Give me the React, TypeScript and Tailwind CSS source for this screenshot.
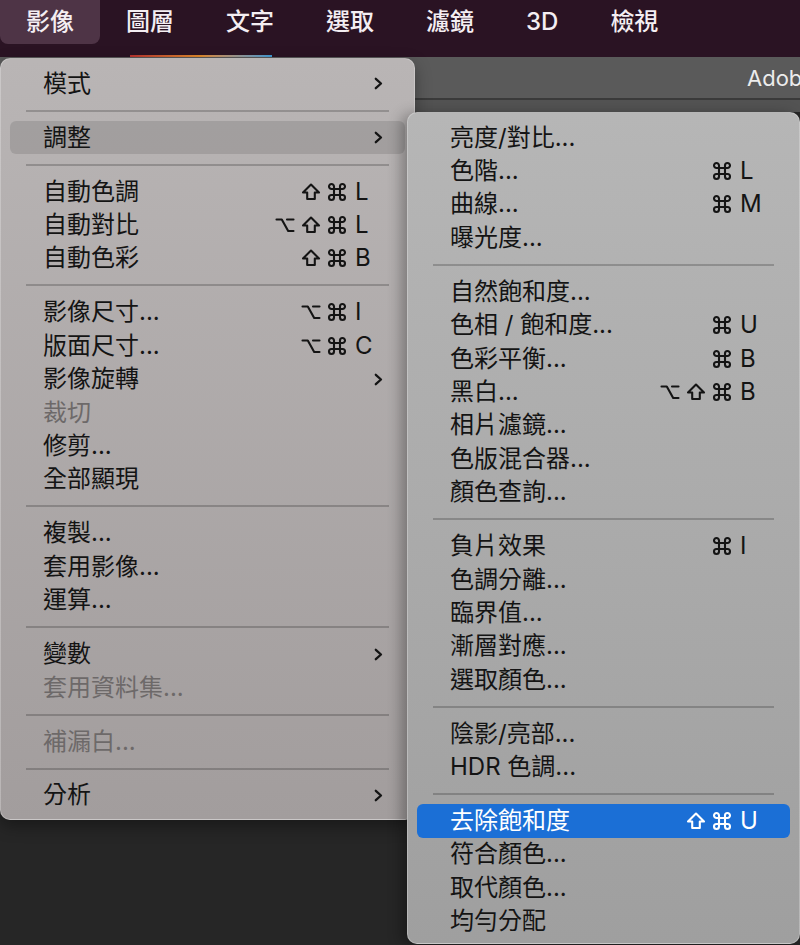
import React from 'react'

type Mod = 'opt' | 'shift' | 'cmd'

type Row =
  | { label: string; mods?: Mod[]; keyChar?: string; sub?: boolean; disabled?: boolean; hl?: 'gray' | 'blue' }
  | 'sep'

const imageMenu: Row[] = [
  { label: '模式', sub: true },
  'sep',
  { label: '調整', sub: true, hl: 'gray' },
  'sep',
  { label: '自動色調', mods: ['shift', 'cmd'], keyChar: 'L' },
  { label: '自動對比', mods: ['opt', 'shift', 'cmd'], keyChar: 'L' },
  { label: '自動色彩', mods: ['shift', 'cmd'], keyChar: 'B' },
  'sep',
  { label: '影像尺寸...', mods: ['opt', 'cmd'], keyChar: 'I' },
  { label: '版面尺寸...', mods: ['opt', 'cmd'], keyChar: 'C' },
  { label: '影像旋轉', sub: true },
  { label: '裁切', disabled: true },
  { label: '修剪...' },
  { label: '全部顯現' },
  'sep',
  { label: '複製...' },
  { label: '套用影像...' },
  { label: '運算...' },
  'sep',
  { label: '變數', sub: true },
  { label: '套用資料集...', disabled: true },
  'sep',
  { label: '補漏白...', disabled: true },
  'sep',
  { label: '分析', sub: true },
]

const adjustMenu: Row[] = [
  { label: '亮度/對比...' },
  { label: '色階...', mods: ['cmd'], keyChar: 'L' },
  { label: '曲線...', mods: ['cmd'], keyChar: 'M' },
  { label: '曝光度...' },
  'sep',
  { label: '自然飽和度...' },
  { label: '色相 / 飽和度...', mods: ['cmd'], keyChar: 'U' },
  { label: '色彩平衡...', mods: ['cmd'], keyChar: 'B' },
  { label: '黑白...', mods: ['opt', 'shift', 'cmd'], keyChar: 'B' },
  { label: '相片濾鏡...' },
  { label: '色版混合器...' },
  { label: '顏色查詢...' },
  'sep',
  { label: '負片效果', mods: ['cmd'], keyChar: 'I' },
  { label: '色調分離...' },
  { label: '臨界值...' },
  { label: '漸層對應...' },
  { label: '選取顏色...' },
  'sep',
  { label: '陰影/亮部...' },
  { label: 'HDR 色調...' },
  'sep',
  { label: '去除飽和度', mods: ['shift', 'cmd'], keyChar: 'U', hl: 'blue' },
  { label: '符合顏色...' },
  { label: '取代顏色...' },
  { label: '均勻分配' },
]

const topMenus = ['影像', '圖層', '文字', '選取', '濾鏡', '3D', '檢視']

function ModKey({ kind }: { kind: Mod }) {
  return (
    <svg width="20" height="20" viewBox="0 0 20 20" fill="none" stroke="currentColor" strokeWidth="2.1" strokeLinecap="round" strokeLinejoin="round">
      {kind === 'cmd' && (
        <path d="M7 7V4.5A2.5 2.5 0 1 0 4.5 7H15.5A2.5 2.5 0 1 0 13 4.5V15.5A2.5 2.5 0 1 0 15.5 13H4.5A2.5 2.5 0 1 0 7 15.5Z" />
      )}
      {kind === 'shift' && <polygon points="10,2.5 18,10.5 13.8,10.5 13.8,17 6.2,17 6.2,10.5 2,10.5" />}
      {kind === 'opt' && (
        <>
          <path d="M1.5 4.5H6.8L13.2 16H18.5" />
          <path d="M12 4.5H18.5" />
        </>
      )}
    </svg>
  )
}

function Chevron() {
  return (
    <svg width="9" height="13" viewBox="0 0 9 13" fill="none">
      <polyline points="1.8,1.8 7,6.5 1.8,11.2" stroke="#141414" strokeWidth="2.3" strokeLinecap="round" strokeLinejoin="round" />
    </svg>
  )
}

function MenuRows({ rows }: { rows: Row[] }) {
  return (
    <>
      {rows.map((r, i) => {
        if (r === 'sep') {
          return (
            <div key={i} className="h-[20.6px] flex items-center mx-[25px]">
              <div className="h-[2px] w-full bg-black/20" />
            </div>
          )
        }
        const blue = r.hl === 'blue'
        const fg = blue ? 'text-white' : r.disabled ? 'text-[#6d6969]' : 'text-[#141414]'
        return (
          <div
            key={i}
            className={`h-[33.4px] mx-[9px] rounded-[6px] flex items-center pl-[33px] pr-[22px] ${fg} ${
              blue ? 'bg-[#1b6fd6]' : r.hl === 'gray' ? 'bg-black/[0.11]' : ''
            }`}
          >
            <span className="flex-1 whitespace-nowrap">{r.label}</span>
            {r.mods && (
              <span className="flex mr-[5px]">
                {r.mods.map((m, j) => (
                  <span key={j} className="w-[26px] flex justify-center">
                    <ModKey kind={m} />
                  </span>
                ))}
              </span>
            )}
            <span className="w-[28px] flex items-center">
              {r.keyChar}
              {r.sub && (
                <span className="ml-auto flex">
                  <Chevron />
                </span>
              )}
            </span>
          </div>
        )
      })}
    </>
  )
}

export default function App() {
  return (
    <div className="relative w-[800px] h-[945px] overflow-hidden bg-[#262626] font-['Inter','Noto_Sans_CJK_TC',sans-serif] text-[24px] leading-none">
      {/* system menu bar */}
      <div className="h-[55px] bg-[#2a1323] flex items-start">
        {topMenus.map((m, i) => (
          <div
            key={m}
            className={`h-[44px] px-[26px] flex items-center text-[24px] font-medium text-[#f4eef2] ${
              i === 0 ? 'bg-[#4e3446] rounded-b-[8px]' : ''
            }`}
          >
            {m}
          </div>
        ))}
      </div>
      <div className="h-[2px] flex bg-[#2a1323]">
        <div className="w-[130px]" />
        <div className="w-[142px] bg-gradient-to-r from-[#b8322f] via-[#e08a2c] to-[#3a9ad6]" />
      </div>

      {/* app window behind the menus */}
      <div className="h-[41px] bg-[#5a5a5a] flex items-center pl-[747px] text-[22px] text-[#ececec] whitespace-nowrap overflow-hidden">
        Adobe
      </div>
      <div className="h-[2px] bg-[#3a3a3a]" />
      <div className="h-[12px] bg-[#535353]" />

      {/* 影像 menu */}
      <div className="absolute left-0 top-[58px] w-[415px] h-[762px] pt-[8px] rounded-[10px] border border-white/25 bg-gradient-to-b from-[#b9b5b5] to-[#a29d9d] shadow-[0_6px_16px_rgba(0,0,0,0.35)]">
        <MenuRows rows={imageMenu} />
      </div>

      {/* 調整 submenu */}
      <div className="absolute left-[407px] top-[112px] w-[393px] h-[832px] pt-[8px] rounded-[10px] border border-white/25 bg-gradient-to-b from-[#b6b6b6] to-[#9f9f9f] shadow-[-6px_2px_14px_rgba(0,0,0,0.3)]">
        <MenuRows rows={adjustMenu} />
      </div>
    </div>
  )
}
